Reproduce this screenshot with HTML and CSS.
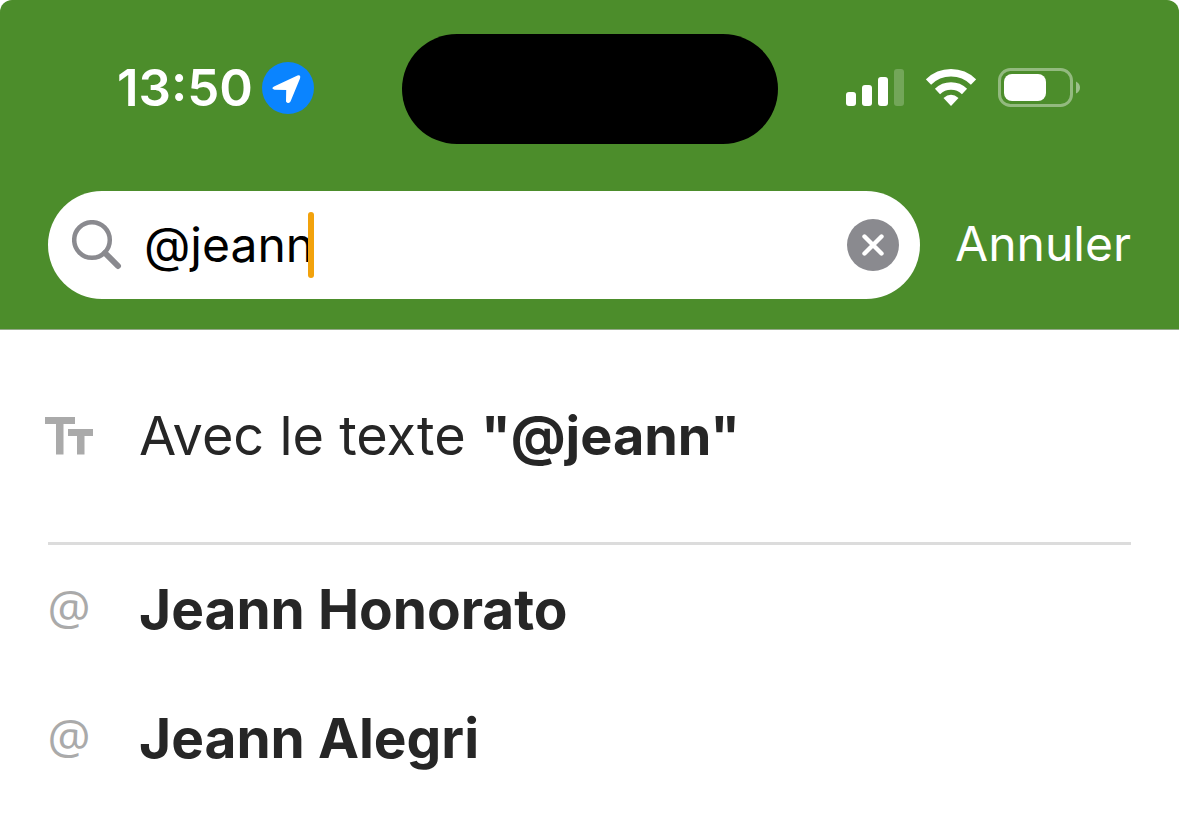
FILE: index.html
```html
<!DOCTYPE html>
<html lang="fr">
<head>
<meta charset="utf-8">
<meta name="viewport" content="width=device-width, initial-scale=1">
<title>Recherche</title>
<link rel="stylesheet" href="styles.css">
</head>
<body>
<header class="header">
  <div class="status-bar">
    <div class="status-left">
      <time class="clock">13:50</time>
      <svg class="location" viewBox="0 0 52 52" aria-hidden="true"><circle cx="26" cy="26" r="26" fill="#0a84ff"/><path d="M12 24.500 35.500 13.500Q39 12.500 38 16.500L28.500 39.500Q26 42.500 24 39.500L24.200 28 12.500 27.800Q8.500 26.500 12 24.500Z" fill="#fff"/></svg>
    </div>
    <div class="island"></div>
    <div class="status-right">
      <svg class="signal" viewBox="0 0 58 38" aria-hidden="true" fill="#fff"><rect y="23" width="10" height="14" rx="3"/><rect x="16" y="16" width="10" height="21" rx="3"/><rect x="32" y="8" width="10" height="29" rx="3"/><rect x="48" width="10" height="37" rx="3" opacity=".22"/></svg>
      <svg class="wifi" viewBox="0 0 50 38" aria-hidden="true"><path d="M2.500 13A32 32 0 0 1 47.500 13M11.500 22.500A19.500 19.500 0 0 1 38.500 22.500" fill="none" stroke="#fff" stroke-width="7.400"/><path d="M17.500 29Q25 22.500 32.500 29L25 37Z" fill="#fff"/></svg>
      <svg class="battery" viewBox="0 0 83 40" aria-hidden="true"><rect x="1.500" y="1.500" width="72" height="36" rx="11" fill="none" stroke="#fff" stroke-opacity=".4" stroke-width="3"/><rect x="6" y="6" width="42" height="27" rx="8" fill="#fff"/><path d="M78 13.500Q82 15.500 82 19.500T78 25.500Z" fill="#fff" opacity=".45"/></svg>
    </div>
  </div>
  <form class="search-bar" role="search">
    <div class="search-field">
      <svg class="magnifier" viewBox="0 0 50 50" aria-hidden="true" fill="none" stroke="#8a8a8f" stroke-width="4.500"><circle cx="20" cy="20" r="17.800"/><path d="M33 33 46 46" stroke-width="6" stroke-linecap="round"/></svg>
      <div class="entry">
        <input class="query" type="text" value="@jeann" size="6" aria-label="Rechercher">
        <span class="caret"></span>
      </div>
      <button class="clear" type="button" aria-label="Effacer">
        <svg class="cross" viewBox="0 0 52 52" aria-hidden="true"><circle cx="26" cy="26" r="26" fill="#8a8a8f"/><path d="M17.500 17.500 34.500 34.500M34.500 17.500 17.500 34.500" stroke="#fff" stroke-width="4.400" stroke-linecap="round"/></svg>
      </button>
    </div>
    <button class="cancel" type="button">Annuler</button>
  </form>
</header>
<main class="results">
  <button class="result result-text" type="button">
    <svg class="result-icon" viewBox="0 0 48 38" aria-hidden="true" fill="#aaa"><path d="M0 0H30V7H18.500V37.500H11V7H0ZM23 12H48V19H39.500V37.500H32V19H23Z"/></svg>
    <span class="label">Avec le texte <b>"@jeann"</b></span>
  </button>
  <hr class="divider">
  <button class="result" type="button">
    <span class="result-icon at">@</span>
    <b class="label name">Jeann Honorato</b>
  </button>
  <button class="result" type="button">
    <span class="result-icon at">@</span>
    <b class="label name">Jeann Alegri</b>
  </button>
</main>
</body>
</html>
```

FILE: styles.css
```css
* { box-sizing: border-box; }
body {
  margin: 0;
  background: #fff;
  color: #262626;
  font-family: Inter, "Liberation Sans", sans-serif;
}
button, input { font: inherit; color: inherit; border: 0; padding: 0; margin: 0; background: none; }
svg { display: block; flex: none; }

.header {
  padding: 34px 48px 30px;
  background: #4c8d2b;
  border-bottom: 1px solid #94a98a;
  border-radius: 12px 12px 0 0;
}
.status-bar {
  display: grid;
  grid-template-columns: 1fr auto 1fr;
  align-items: center;
}
.status-left { display: flex; align-items: center; gap: 9px; padding: 0 0 2px 69px; }
.clock { color: #fff; font-size: 51px; font-weight: 600; line-height: 60px; }
.location { width: 52px; height: 52px; }
.island { width: 376px; height: 110px; border-radius: 55px; background: #000; }
.status-right { display: flex; align-items: center; justify-content: flex-end; gap: 22px; padding: 0 50px 2px 0; }
.signal { width: 58px; height: 38px; }
.wifi { width: 50px; height: 38px; }
.battery { width: 83px; height: 40px; }

.search-bar { display: flex; align-items: center; gap: 35px; margin-top: 47px; }
.search-field {
  flex: 1;
  display: flex;
  align-items: center;
  gap: 22px;
  height: 108px;
  padding: 0 21px 0 24px;
  border-radius: 54px;
  background: #fff;
}
.magnifier { width: 50px; height: 50px; }
.entry { flex: 1; display: flex; align-items: center; }
.query { field-sizing: content; color: #000; font-size: 48px; line-height: 60px; outline: none; }
.caret { width: 6px; height: 66px; margin-left: -6px; border-radius: 3px; background: #f2a20c; z-index: 1; }
.cross { width: 52px; height: 52px; }
.cancel { padding-bottom: 2px; color: #fff; font-size: 48px; line-height: 60px; }

.result {
  display: flex;
  align-items: center;
  gap: 46px;
  width: 100%;
  padding: 29px 45px 30px;
  text-align: left;
}
.result-text { padding-top: 71px; padding-bottom: 71px; }
.result-icon { flex: none; width: 48px; }
.at { padding-bottom: 4px; color: #aaa; font-family: "Open Sans", "Noto Sans", sans-serif; font-size: 48px; font-weight: 500; line-height: 60px; text-align: center; }
.label { font-size: 54px; line-height: 70px; }
.name { font-size: 55px; }
.divider { height: 3px; margin: 0 48px; border: 0; background: #dcdcdc; }
```
